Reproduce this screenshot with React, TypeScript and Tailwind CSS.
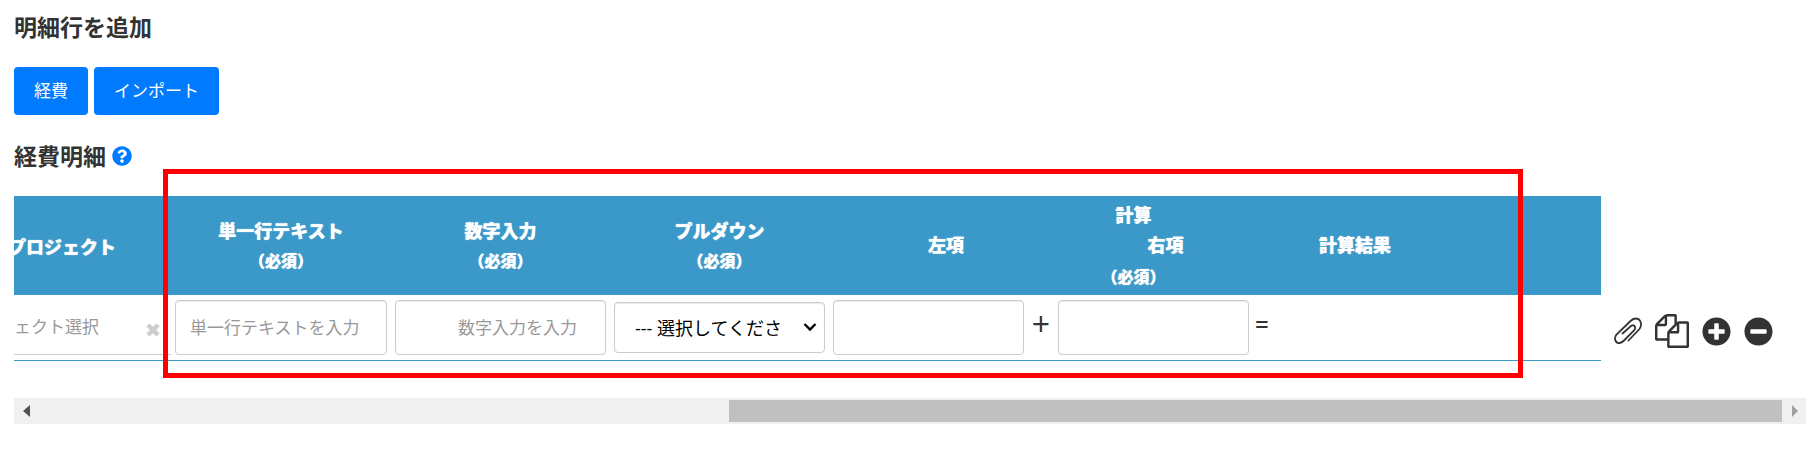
import { FaPlusCircle, FaMinusCircle, FaQuestionCircle } from "react-icons/fa";

const headCell = "p-0 pt-[3px] text-center align-middle text-lg leading-6 font-black [text-shadow:0_0_1px_#fff]";
const field =
  "h-[55px] w-full rounded-sm border border-[#ccc] bg-white px-3.5 text-[17px] text-[#333] shadow-[inset_0_1px_1px_rgba(0,0,0,0.08)] placeholder:text-[#999]";
const operand =
  "h-[55px] w-[191px] rounded-sm border border-[#ccc] bg-white px-3.5 text-[17px] shadow-[inset_0_1px_1px_rgba(0,0,0,0.08)]";

const Required = () => <div className="pt-1 text-base leading-7">（必須）</div>;

const ClearIcon = () => (
  <svg viewBox="0 0 14 14" className="mt-1.5 size-3.5 shrink-0" stroke="#ccc" strokeWidth="4.5">
    <path d="M2 2l10 10M12 2 2 12" />
  </svg>
);

const ClipIcon = () => (
  <svg viewBox="0 0 28 28" className="size-7" fill="none" stroke="#333" strokeWidth="1.8" strokeLinecap="round">
    <path d="M14.5 23.5 25.5 12C28.5 8 27 1.5 21.5 1.5C19 1.5 17.5 3 16 4.5L2.5 17.5C-.5 21.5 1.5 26.5 5.5 26C7.500 25.800 8.5 25 10 23.5L20 13.5C22.5 10.5 20.5 7.5 17.5 8.5L8.5 16.5" />
  </svg>
);

const CopyIcon = () => (
  <svg viewBox="0 0 1792 1792" className="size-[34px]" fill="#333">
    <path d="M1696 384q40 0 68 28t28 68v1216q0 40-28 68t-68 28h-960q-40 0-68-28t-28-68v-288h-544q-40 0-68-28t-28-68v-672q0-40 20-88t48-76l408-408q28-28 76-48t88-20h416q40 0 68 28t28 68v328q68-40 128-40h416zm-544 213l-299 299h299v-299zm-640-384l-299 299h299v-299zm196 647l316-316v-416h-384v416q0 40-28 68t-68 28h-416v640h512v-256q0-40 20-88t48-76zm956 804v-1152h-384v416q0 40-28 68t-68 28h-416v640h896z" />
  </svg>
);

export default function App() {
  return (
    <div className="bg-white pt-[11px] pr-1 pl-3.5 font-['Open_Sans','Noto_Sans_CJK_JP',sans-serif] text-[#333]">
      <h2 className="text-[23px] leading-8 font-bold">明細行を追加</h2>

      <div className="mt-6 flex gap-1.5">
        <button className="h-12 rounded bg-[#007bff] px-5 text-[17px] text-white">経費</button>
        <button className="h-12 rounded bg-[#007bff] px-5 text-[17px] text-white">インポート</button>
      </div>

      <h2 className="mt-[25px] flex items-center gap-1.5 text-[23px] leading-8 font-bold">
        経費明細
        <FaQuestionCircle className="size-5 text-[#007bff]" />
      </h2>

      <div className="relative mt-6 flex items-start">
        <div className="min-w-0 flex-1 border-b border-[#3a99c9]">
          <table className="w-full table-fixed border-collapse">
            <colgroup>
              <col className="w-[157px]" />
              <col className="w-[220px]" />
              <col className="w-[219px]" />
              <col className="w-[219px]" />
              <col className="w-[229px]" />
              <col className="w-[215px]" />
              <col />
            </colgroup>
            <thead>
              <tr className="h-[99px] bg-[#3a99c9] text-white">
                {/* scrolled partly out of view */}
                <th className={headCell}>
                  <div className="flex justify-end overflow-hidden pr-[55px] whitespace-nowrap">プロジェクト</div>
                </th>
                <th className={headCell}>単一行テキスト<Required /></th>
                <th className={headCell}>数字入力<Required /></th>
                <th className={headCell}>プルダウン<Required /></th>
                <th className={headCell} colSpan={3}>
                  <div className="mr-[163px]">計算</div>
                  <div className="flex pt-1.5 pb-0.5">
                    <span className="w-[234px]">左項</span>
                    <span className="w-[205px]">右項</span>
                    <span className="w-[174px]">計算結果</span>
                  </div>
                  <div className="mr-[163px]"><Required /></div>
                </th>
              </tr>
            </thead>
            <tbody>
              <tr className="h-[65px] align-top">
                <td className="p-0 pt-[5px]">
                  <div className="flex h-[55px] items-center justify-between overflow-hidden border-b border-[#ccc] pr-[11px] text-[17px] whitespace-nowrap text-[#999]">
                    <span>ェクト選択</span>
                    <ClearIcon />
                  </div>
                </td>
                <td className="p-0 px-1 pt-[5px]">
                  <input aria-label="単一行テキスト" className={field} placeholder="単一行テキストを入力" />
                </td>
                <td className="p-0 px-1 pt-[5px]">
                  <input aria-label="数字入力" className={`${field} pr-7 text-right`} placeholder="数字入力を入力" />
                </td>
                <td className="p-0 px-1 pt-[7px]">
                  <div className="relative">
                    <select
                      aria-label="プルダウン"
                      className="block h-[51px] w-full appearance-none rounded-sm border border-[#ccc] bg-white pr-10 pl-5 text-lg text-black shadow-[inset_0_1px_1px_rgba(0,0,0,0.08)]"
                    >
                      <option>--- 選択してください ---</option>
                    </select>
                    <svg
                      viewBox="0 0 14 10"
                      className="pointer-events-none absolute top-5 right-2 h-2.5 w-3.5"
                      fill="none"
                      stroke="#000"
                      strokeWidth="2.4"
                    >
                      <path d="M1.5 2 7 7.5 12.5 2" />
                    </svg>
                  </div>
                </td>
                <td className="p-0 pt-[5px] pl-1">
                  <div className="flex items-start">
                    <input aria-label="左項" className={operand} />
                    <span className="flex-1 text-center text-[32px] leading-12 font-medium">+</span>
                  </div>
                </td>
                <td className="p-0 pt-[5px]">
                  <div className="flex items-start gap-1.5">
                    <input aria-label="右項" className={operand} />
                    <span className="text-2xl leading-12 font-semibold">=</span>
                  </div>
                </td>
                <td></td>
              </tr>
            </tbody>
          </table>
        </div>

        <div className="flex w-[205px] items-center gap-[13px] pt-[118px] pl-[13px]">
          <button aria-label="添付"><ClipIcon /></button>
          <button aria-label="コピー"><CopyIcon /></button>
          <button aria-label="追加"><FaPlusCircle className="size-[29px]" /></button>
          <button aria-label="削除"><FaMinusCircle className="size-[29px]" /></button>
        </div>

        <div className="pointer-events-none absolute -top-[27px] right-[283px] left-[149px] h-[209px] border-5 border-[#ff0000]" />
      </div>

      <div className="mt-[37px] flex h-[26px] items-center bg-[#f0f0f0]">
        <svg viewBox="0 0 24 26" className="h-[26px] w-6" fill="#505050">
          <path d="M9 13 16 7v12z" />
        </svg>
        <div className="flex flex-1 justify-end">
          <div className="h-[22px] w-[60.4%] bg-[#c0c0c0]" />
        </div>
        <svg viewBox="0 0 24 26" className="h-[26px] w-6" fill="#a0a0a0">
          <path d="M16 13 10 7v12z" />
        </svg>
      </div>
    </div>
  );
}
